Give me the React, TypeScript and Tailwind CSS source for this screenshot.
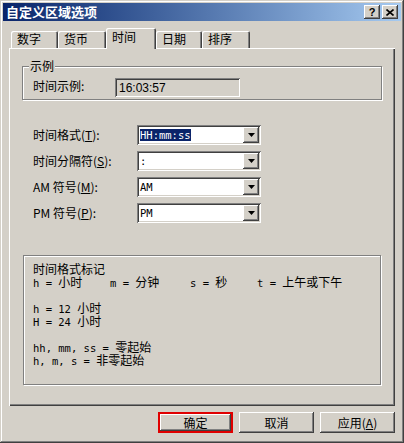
import React from "react";

const FONT = "font-['Noto_Sans_CJK_SC','Noto_Sans',sans-serif]";
const RAISED =
  "shadow-[inset_-1px_-1px_#404040,inset_1px_1px_#ffffff,inset_-2px_-2px_#808080,inset_2px_2px_#d4d0c8]";
const SUNKEN =
  "shadow-[inset_1px_1px_#808080,inset_-1px_-1px_#ffffff,inset_2px_2px_#404040,inset_-2px_-2px_#d4d0c8]";

function M({ children }: { children: React.ReactNode }) {
  return (
    <span className="whitespace-pre font-['DejaVu_Sans_Mono',monospace] text-[10.5px]">{children}</span>
  );
}

function Arrow() {
  return (
    <svg width="7" height="4" viewBox="0 0 7 4">
      <polygon points="0,0 7,0 3.5,4" fill="#000" />
    </svg>
  );
}

function Combo({ children }: { children: React.ReactNode }) {
  return (
    <div className={`flex h-[20px] w-[124px] items-center bg-white p-[2px] ${SUNKEN}`}>
      <div className="flex-1 pl-[1px] text-[10.5px] leading-[13px] text-black font-['DejaVu_Sans_Mono',monospace]">
        {children}
      </div>
      <div className={`flex h-[16px] w-[16px] items-center justify-center bg-[#d4d0c8] ${RAISED}`}>
        <Arrow />
      </div>
    </div>
  );
}

function Tab({ label, w, selected }: { label: string; w: number; selected?: boolean }) {
  return (
    <div
      style={{ width: w }}
      className={`flex items-start bg-[#d4d0c8] pl-[6px] text-[12px] text-black rounded-t-[2px] shadow-[inset_1px_1px_#ffffff,inset_-1px_0_#404040,inset_-2px_0_#808080] ${
        selected ? "relative z-10 -mb-px h-[21px] pt-[1px]" : "h-[17px] pt-[0px]"
      }`}
    >
      <span className="leading-[15px]">{label}</span>
    </div>
  );
}

function Button({ children }: { children: React.ReactNode }) {
  return (
    <div className={`flex h-[21px] w-[75px] items-center justify-center bg-[#d4d0c8] text-[12px] text-black ${RAISED}`}>
      {children}
    </div>
  );
}

export default function App() {
  return (
    <div
      className={`flex h-[443px] w-[404px] flex-col bg-[#d4d0c8] p-[3px] ${FONT} shadow-[inset_-1px_-1px_#404040,inset_1px_1px_#d4d0c8,inset_-2px_-2px_#808080,inset_2px_2px_#ffffff]`}
    >
      {/* Title bar */}
      <div className="flex h-[18px] items-center bg-gradient-to-r from-[#0a246a] to-[#a6caf0] pl-[3px] pr-[3px]">
        <span className="flex-1 text-[13px] font-bold leading-[16px] text-white">自定义区域选项</span>
        <div className={`flex h-[14px] w-[16px] items-center justify-center bg-[#d4d0c8] ${RAISED}`}>
          <span className="text-[11px] font-bold leading-[12px] text-black font-['Liberation_Sans',sans-serif]">?</span>
        </div>
        <div className={`ml-[2px] flex h-[14px] w-[16px] items-center justify-center bg-[#d4d0c8] ${RAISED}`}>
          <svg width="8" height="7" viewBox="0 0 8 7">
            <path d="M0.5 0.5 L7.5 6.5 M7.5 0.5 L0.5 6.5" stroke="#000" strokeWidth="1.6" />
          </svg>
        </div>
      </div>

      {/* Tabs */}
      <div className="ml-[8px] mt-[7px] flex h-[20px] items-end">
        <Tab label="数字" w={47} />
        <Tab label="货币" w={48} />
        <Tab label="时间" w={50} selected />
        <Tab label="日期" w={46} />
        <Tab label="排序" w={48} />
      </div>

      {/* Panel */}
      <div
        className={`ml-[6px] flex h-[358px] w-[386px] flex-col text-[12px] text-black shadow-[inset_1px_1px_#ffffff,inset_-1px_-1px_#404040,inset_-2px_-2px_#808080]`}
      >
        {/* 示例 group */}
        <div className="relative ml-[13px] mt-[18px] h-[34px] w-[360px] border border-[#808080] shadow-[inset_1px_1px_#ffffff,1px_1px_#ffffff]">
          <span className="absolute left-[6px] top-[-8px] bg-[#d4d0c8] px-[1px] leading-[14px]">示例</span>
          <div className="flex items-center pl-[10px] pt-[11px]">
            <span className="w-[82px] leading-[14px] -mt-[4px]">时间示例:</span>
            <div className={`flex h-[19px] w-[125px] items-center bg-[#d4d0c8] pl-[4px] ${SUNKEN}`}>
              <span className="text-[12px] leading-[14px] font-['Liberation_Sans',sans-serif]">16:03:57</span>
            </div>
          </div>
        </div>

        {/* Combos */}
        <div className="ml-[24px] mt-[25px] flex flex-col gap-[6px]">
          <div className="flex items-center">
            <span className="w-[104px] leading-[14px]">
              时间格式(<u>T</u>):
            </span>
            <Combo>
              <span className="bg-[#0a246a] text-white">HH:mm:ss</span>
            </Combo>
          </div>
          <div className="flex items-center">
            <span className="w-[104px] leading-[14px]">
              时间分隔符(<u>S</u>):
            </span>
            <Combo>:</Combo>
          </div>
          <div className="flex items-center">
            <span className="w-[104px] leading-[14px]">
              AM 符号(<u>M</u>):
            </span>
            <Combo>AM</Combo>
          </div>
          <div className="flex items-center">
            <span className="w-[104px] leading-[14px]">
              PM 符号(<u>P</u>):
            </span>
            <Combo>PM</Combo>
          </div>
        </div>

        {/* Format group */}
        <div className="ml-[14px] mt-[32px] h-[130px] w-[358px] border border-[#808080] pl-[9px] pt-[6px] text-[12px] leading-[13px] shadow-[inset_1px_1px_#ffffff,1px_1px_#ffffff]">
          <div className="h-[13px]">时间格式标记</div>
          <div className="flex h-[13px]">
            <span className="w-[77px]">
              <M>{"h = "}</M>小时
            </span>
            <span className="w-[80px]">
              <M>{"m = "}</M>分钟
            </span>
            <span className="w-[67px]">
              <M>{"s = "}</M>秒
            </span>
            <span>
              <M>{"t = "}</M>上午或下午
            </span>
          </div>
          <div className="h-[13px]" />
          <div className="h-[13px]">
            <M>{"h = 12 "}</M>小时
          </div>
          <div className="h-[13px]">
            <M>{"H = 24 "}</M>小时
          </div>
          <div className="h-[13px]" />
          <div className="h-[13px]">
            <M>{"hh, mm, ss = "}</M>零起始
          </div>
          <div className="h-[13px]">
            <M>{"h, m, s = "}</M>非零起始
          </div>
        </div>
      </div>

      {/* Buttons */}
      <div className="mt-[6px] flex justify-end gap-[6px] pr-[6px]">
        <div className="border-2 border-[#e00000]">
          <div className={`flex h-[17px] w-[71px] items-center justify-center bg-[#d4d0c8] text-[12px] text-black ${RAISED}`}>
            确定
          </div>
        </div>
        <Button>取消</Button>
        <Button>
          应用(<u>A</u>)
        </Button>
      </div>
    </div>
  );
}
